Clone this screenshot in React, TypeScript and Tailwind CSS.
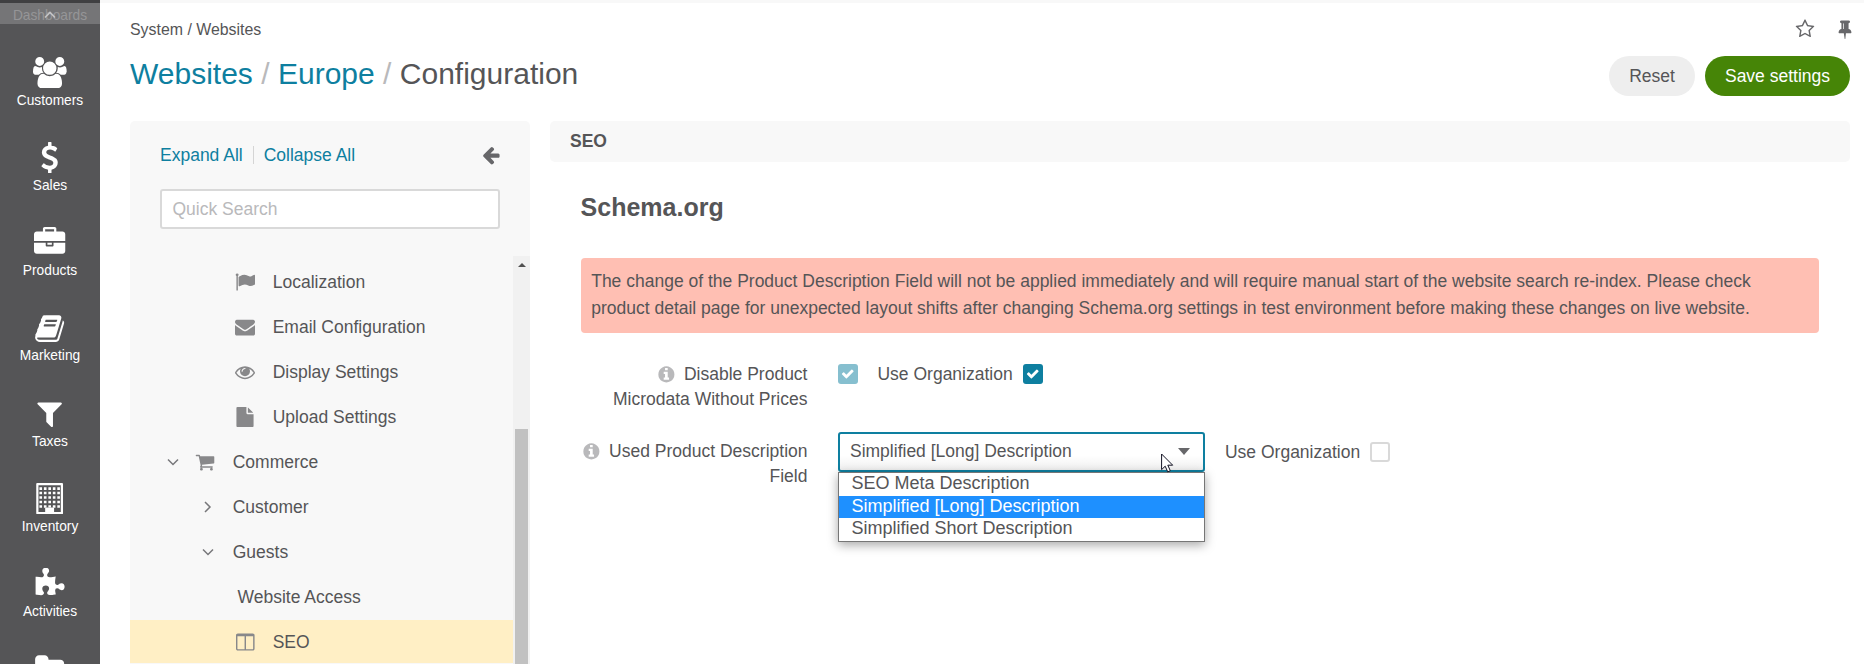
import type { ReactNode } from "react";

const ICONS = {
  users: "M657 896q-162 5-265 128h-134q-82 0-138-40.5t-56-118.5q0-353 124-353 6 0 43.5 21t97.5 42.5 119 21.5q67 0 133-23-5 37-5 66 0 159 93 256zm1071 637q0 120-73 189.5t-194 69.5h-874q-121 0-194-69.5t-73-189.5q0-53 3.5-103.5t14-109 26.5-108.5 43-97.5 62-81 85.5-53.5 111.5-20q10 0 43 21.5t73 48 107 48 135 21.5 135-21.5 107-48 73-48 43-21.5q61 0 111.5 20t85.5 53.5 62 81 43 97.5 26.5 108.5 14 109 3.5 103.5zm-1024-1277q0 106-75 181t-181 75-181-75-75-181 75-181 181-75 181 75 75 181zm704 384q0 159-112.5 271.5t-271.5 112.5-271.5-112.5-112.5-271.5 112.5-271.5 271.5-112.5 271.5 112.5 112.5 271.5zm576 225q0 78-56 118.5t-138 40.5h-134q-103-123-265-128 93-97 93-256 0-29-5-66 66 23 133 23 59 0 119-21.5t97.5-42.5 43.5-21q124 0 124 353zm-128-609q0 106-75 181t-181 75-181-75-75-181 75-181 181-75 181 75 75 181z",
  dollar: "M1362 1185q0 153-99.5 263.5t-258.5 136.5v175q0 14-9 23t-23 9h-135q-13 0-22.5-9.5t-9.5-22.5v-175q-66-9-127.5-31t-101.5-44.5-74-48-46.5-37.5-17.5-18q-17-21-2-41l103-135q7-10 23-12 15-2 24 9l2 2q113 99 243 125 37 8 74 8 81 0 142.5-43t61.5-122q0-28-15-53t-33.5-42-58.5-37.5-66-32-80-32.5q-39-16-61.5-25t-61.5-26.5-62.5-31-56.5-35.5-53.5-42.5-43.5-49-35.5-58-21-66.5-8.5-78q0-138 98-242t255-134v-180q0-13 9.5-22.5t22.5-9.5h135q14 0 23 9t9 23v176q57 6 110.5 23t87 33.5 63.5 37.5 39 29 15 14q17 18 5 38l-81 146q-8 15-23 16-14 3-27-7-3-3-14.5-12t-39-26.5-58.5-32-74.5-26-85.5-11.5q-95 0-155 43t-60 111q0 26 8.5 48t29.5 41.5 39.5 33 56 31 60.5 27 70 27.5q53 20 81 31.5t76 35 75.5 42.5 62 50 53 63.5 31.5 76.5 13 94z",
  briefcase: "M640 256h512v-128h-512v128zm1152 640v480q0 66-47 113t-113 47h-1472q-66 0-113-47t-47-113v-480h672v160q0 26 19 45t45 19h320q26 0 45-19t19-45v-160h672zm-768 0v128h-256v-128h256zm768-480v384h-1792v-384q0-66 47-113t113-47h352v-160q0-40 28-68t68-28h576q40 0 68 28t28 68v160h352q66 0 113 47t47 113z",
  book: "M1703 478q40 57 18 129l-275 906q-19 64-76.5 107.5t-122.5 43.5h-923q-77 0-148.5-53.5t-99.5-131.5q-24-67-2-127 0-4 3-27t4-37q1-8-3-21.5t-3-19.5q2-11 8-21t16.5-23.5 16.5-23.5q23-38 45-91.5t30-91.5q3-10 .5-30t-.5-28q3-11 17-28t17-23q21-36 42-92t25-90q1-9-2.5-32t.5-28q4-13 22-30.5t22-22.5q19-26 42.5-84.5t27.5-96.5q1-8-3-25.5t-2-26.5q2-8 9-18t18-23 17-21q8-12 16.5-30.5t15-35 16-36 19.5-32 26.5-23.5 36-11.5 47.5 5.5l-1 3q38-9 51-9h761q74 0 114 56t18 130l-274 906q-36 119-71.5 153.5t-128.5 34.5h-869q-27 0-38 15-11 16-1 43 24 70 144 70h923q29 0 56-15.5t35-41.5l300-987q7-22 5-57 38 15 59 43zm-1064 2q-4 13 2 22.5t20 9.5h608q13 0 25.5-9.5t16.5-22.5l21-64q4-13-2-22.5t-20-9.5h-608q-13 0-25.5 9.5t-16.5 22.5zm-83 256q-4 13 2 22.5t20 9.5h608q13 0 25.5-9.5t16.5-22.5l21-64q4-13-2-22.5t-20-9.5h-608q-13 0-25.5 9.5t-16.5 22.5z",
  filter: "M1595 295q17 41-14 70l-493 493v742q0 42-39 59-13 5-25 5-27 0-45-19l-256-256q-19-19-19-45v-486l-493-493q-31-29-14-70 17-39 59-39h1280q42 0 59 39z",
  puzzle: "M1755 1082q0 81-44.5 135t-123.5 54q-41 0-77.5-17.5t-59-38-56.5-38-71-17.5q-110 0-110 124 0 39 16 115t15 115v5q-22 0-33 1-34 3-97.5 11.5t-115.5 13.5-98 5q-61 0-103-26.5t-42-83.5q0-37 17.5-71t38-56.5 38-59 17.5-77.5q0-79-54-123.5t-135-44.5q-84 0-143 45.5t-59 127.5q0 43 15 83t33.5 64.5 33.5 53 15 50.5q0 45-46 89-37 35-117 35-95 0-245-24-9-2-27.5-4t-27.5-4l-13-2q-1 0-3-1-2 0-2-1v-1024q2 1 17.5 3.5t34 5 21.5 3.5q150 24 245 24 80 0 117-35 46-44 46-89 0-22-15-50.5t-33.5-53-33.5-64.5-15-83q0-82 59-127.5t144-45.5q80 0 134 44.5t54 123.5q0 41-17.5 77.5t-38 59-38 56.5-17.5 71q0 57 42 83.5t103 26.5q64 0 180-15t163-17v2q-1 2-3.5 17.5t-5 34-3.5 21.5q-24 150-24 245 0 80 35 117 44 46 89 46 22 0 50.5-15t53-33.5 64.5-33.5 83-15q82 0 127.5 59t45.5 143z",
  folder: "M1728 608v704q0 92-66 158t-158 66h-1216q-92 0-158-66t-66-158v-960q0-92 66-158t158-66h320q92 0 158 66t66 158v32h672q92 0 158 66t66 158z",
  flag: "M320 256q0 72-64 110v1266q0 13-9.5 22.5t-22.5 9.5h-64q-13 0-22.5-9.5t-9.5-22.5v-1266q-64-38-64-110 0-53 37.5-90.5t90.5-37.5 90.5 37.5 37.5 90.5zm1472 64v763q0 25-12.5 38.5t-39.5 27.5q-215 116-369 116-61 0-123.5-22t-108.5-48-115.5-48-142.5-22q-192 0-464 146-17 9-33 9-26 0-45-19t-19-45v-742q0-32 31-55 21-14 79-43 236-120 421-120 107 0 200 29t219 88q38 19 88 19 54 0 117.5-21t110-47 88-47 54.5-21q26 0 45 19t19 45z",
  envelope: "M1792 710v794q0 66-47 113t-113 47h-1472q-66 0-113-47t-47-113v-794q44 49 101 87 362 246 497 345 57 42 92.5 65.5t94.5 48 110 24.5h2q51 0 110-24.5t94.5-48 92.5-65.5q170-123 498-345 57-39 100-87zm0-294q0 79-49 151t-122 123q-376 261-468 325-10 7-42.5 30.5t-54 38-52 32.5-57.5 27-50 9h-2q-23 0-50-9t-57.5-27-52-32.5-54-38-42.5-30.5q-91-64-262-182.5t-205-142.5q-62-42-117-115.5t-55-136.5q0-78 41.5-130t118.5-52h1472q65 0 112.5 47t47.5 113z",
  eye: "M1664 960q-152-236-381-353 61 104 61 225 0 185-131.5 316.5t-316.5 131.5-316.5-131.5-131.5-316.5q0-121 61-225-229 117-381 353 133 205 333.5 326.5t434.5 121.5 434.5-121.5 333.5-326.5zm-720-384q0-20-14-34t-34-14q-125 0-214.5 89.5t-89.5 214.5q0 20 14 34t34 14 34-14 14-34q0-86 61-147t147-61q20 0 34-14t14-34zm848 384q0 34-20 69-140 230-376.5 368.5t-499.5 138.5-499.5-139-376.5-368q-20-35-20-69t20-69q140-229 376.5-368t499.5-139 499.5 139 376.5 368q20 35 20 69z",
  file: "M1152 512v-472q22 14 36 28l408 408q14 14 28 36h-472zm-128 32q0 40 28 68t68 28h544v1056q0 40-28 68t-68 28h-1344q-40 0-68-28t-28-68v-1600q0-40 28-68t68-28h800v544z",
  cart: "M704 1536q0 52-38 90t-90 38-90-38-38-90 38-90 90-38 90 38 38 90zm896 0q0 52-38 90t-90 38-90-38-38-90 38-90 90-38 90 38 38 90zm128-1088v512q0 24-16.5 42.5t-40.5 21.5l-1044 122q13 60 13 70 0 16-24 64h920q26 0 45 19t19 45-19 45-45 19h-1024q-26 0-45-19t-19-45q0-11 8-31.5t16-36 21.5-40 15.5-29.5l-177-823h-204q-26 0-45-19t-19-45 19-45 45-19h256q16 0 28.5 6.5t19.5 15.5 13 24.5 8 26 5.5 29.5 4.5 26h1201q26 0 45 19t19 45z",
  columns: "M160 1536h608v-1152h-640v1120q0 13 9.5 22.5t22.5 9.5zm1376-32v-1120h-640v1152h608q13 0 22.5-9.5t9.5-22.5zm128-1216v1216q0 66-47 113t-113 47h-1344q-66 0-113-47t-47-113v-1216q0-66 47-113t113-47h1344q66 0 113 47t47 113z",
  arrowLeft: "M1664 896v128q0 53-32.5 90.5t-84.5 37.5h-704l293 294q38 36 38 90t-38 90l-75 76q-37 37-90 37-52 0-91-37l-651-652q-37-37-37-90 0-52 37-91l651-650q38-38 91-38 52 0 90 38l75 74q38 38 38 91t-38 91l-293 293h704q52 0 84.5 37.5t32.5 90.5z",
  star: "M1201 1004l306-297-422-62-189-382-189 382-422 62 306 297-73 421 378-199 377 199zm527-357q0 22-26 48l-363 354 86 500q1 7 1 20 0 50-41 50-19 0-40-12l-449-236-449 236q-22 12-40 12-21 0-31.5-14.5t-10.5-35.5q0-6 2-20l86-500-364-354q-25-27-25-48 0-37 56-46l502-73 225-455q19-41 49-41t49 41l225 455 502 73q56 9 56 46z",
  pin: "M800 864v-448q0-14-9-23t-23-9-23 9-9 23v448q0 14 9 23t23 9 23-9 9-23zm672 352q0 26-19 45t-45 19h-429l-51 483q-2 12-10.5 20.5t-20.5 8.5h-1q-27 0-32-27l-76-485h-404q-26 0-45-19t-19-45q0-123 78.5-221.5t177.5-98.5v-512q-52 0-90-38t-38-90 38-90 90-38h640q52 0 90 38t38 90-38 90-90 38v512q99 0 177.5 98.5t78.5 221.5z",
  info: "M1152 1376v-160q0-14-9-23t-23-9h-96v-512q0-14-9-23t-23-9h-320q-14 0-23 9t-9 23v160q0 14 9 23t23 9h96v320h-96q-14 0-23 9t-9 23v160q0 14 9 23t23 9h448q14 0 23-9t9-23zm-128-896v-160q0-14-9-23t-23-9h-192q-14 0-23 9t-9 23v160q0 14 9 23t23 9h192q14 0 23-9t9-23zm640 416q0 209-103 385.5t-279.5 279.5-385.5 103-385.5-103-279.5-279.5-103-385.5 103-385.5 279.5-279.5 385.5-103 385.5 103 279.5 279.5 103 385.5z",
  check: "M1671 566q0 40-28 68l-724 724-136 136q-28 28-68 28t-68-28l-136-136-362-362q-28-28-28-68t28-68l136-136q28-28 68-28t68 28l294 295 656-657q28-28 68-28t68 28l136 136q28 28 28 68z",
  building:
    "M192 0h1408q26 0 45 19t19 45v1664q0 26-19 45t-45 19h-1408q-26 0-45-19t-19-45v-1664q0-26 19-45t45-19zM256 128v1536h384v-224q0-13 9.5-22.5t22.5-9.5h448q13 0 22.5 9.5t9.5 22.5v224h384v-1536z" +
    [256, 512, 768, 1024, 1280]
      .map((y) => [370, 626, 882, 1138, 1394].map((x) => `M${x - 58} ${y - 10}h150v150h-150z`).join(""))
      .join(""),
};

type IconName = keyof typeof ICONS;

function Icon({ name, className, box = "0 0 1792 1792" }: { name: IconName; className: string; box?: string }) {
  return (
    <svg viewBox={box} fill="currentColor" fillRule={name === "building" ? "evenodd" : "nonzero"} className={`shrink-0 ${className}`} aria-hidden="true">
      <path d={ICONS[name]} />
    </svg>
  );
}

function Angle({ open }: { open: boolean }) {
  return (
    <svg viewBox="0 0 12 12" fill="none" stroke="currentColor" strokeWidth="1.5" className="size-3 shrink-0" aria-hidden="true">
      <path d={open ? "M1 3.5 6 8.5 11 3.5" : "M3 1 8 6 3 11"} />
    </svg>
  );
}

const NAV: { icon: IconName; label: string; box?: string; size?: string }[] = [
  { icon: "users", label: "Customers", box: "64 0 1920 1792", size: "w-[33.5px] h-[31.25px]" },
  { icon: "dollar", label: "Sales" },
  { icon: "briefcase", label: "Products" },
  { icon: "book", label: "Marketing" },
  { icon: "filter", label: "Taxes" },
  { icon: "building", label: "Inventory" },
  { icon: "puzzle", label: "Activities" },
  { icon: "folder", label: "" },
];

function Sidebar() {
  return (
    <nav className="flex w-[100px] shrink-0 flex-col overflow-hidden bg-[#555557] text-white">
      <div className="h-[3px] shrink-0 bg-[#404042]" />
      <div className="relative flex h-[21px] shrink-0 items-center justify-center bg-[#757577] text-[13.75px] leading-none text-[#959597]">
        <span className="pt-[4px]">Dashboards</span>
        <svg viewBox="0 0 12 8" fill="none" stroke="#c4c4c6" strokeWidth="1.6" className="absolute left-[44px] top-[8px] h-2 w-3">
          <path d="M1 6.5 6 1.5 11 6.5" />
        </svg>
      </div>
      <ul className="flex flex-col pt-[33px]">
        {NAV.map((item) => (
          <li key={item.icon} className="flex h-[85.2px] shrink-0 flex-col items-center">
            <Icon name={item.icon} box={item.box} className={item.size ?? "size-[31.25px]"} />
            <span className="mt-[4.6px] text-[13.75px] leading-[16px]">{item.label}</span>
          </li>
        ))}
      </ul>
    </nav>
  );
}

function TreeRow({ pad, active, children }: { pad: string; active?: boolean; children: ReactNode }) {
  return (
    <li className={`mb-[2px] flex h-[43px] shrink-0 items-center ${pad} ${active ? "bg-[#ffefc5]" : ""}`}>{children}</li>
  );
}

const SETTINGS: { icon: IconName; label: string }[] = [
  { icon: "flag", label: "Localization" },
  { icon: "envelope", label: "Email Configuration" },
  { icon: "eye", label: "Display Settings" },
  { icon: "file", label: "Upload Settings" },
];

function ConfigTree() {
  return (
    <aside className="flex w-[400px] shrink-0 flex-col overflow-hidden rounded-t-[5px] bg-[#f8f8f8]">
      <div className="flex h-[68px] shrink-0 items-center pl-[30px] pr-[29px] text-[#0e7fa0]">
        <span>Expand All</span>
        <span className="mx-[10px] h-[18px] w-px bg-[#d5d5d5]" />
        <span>Collapse All</span>
        <Icon name="arrowLeft" className="ml-auto size-5 text-[#67676a]" />
      </div>
      <div className="mx-[30px] flex h-10 shrink-0 items-center rounded-[3px] border-2 border-[#d9d9d9] bg-white pl-[10.5px] text-[#b9b9bb]">
        Quick Search
      </div>
      <div className="mt-[27px] flex min-h-0 flex-1">
        <ul className="flex min-w-0 flex-1 flex-col pt-1">
          {SETTINGS.map((s) => (
            <TreeRow key={s.label} pad="pl-[105px]">
              <Icon name={s.icon} className="size-5 text-[#88888a]" />
              <span className="ml-[17.7px]">{s.label}</span>
            </TreeRow>
          ))}
          <TreeRow pad="pl-[36.5px] text-[#77777a]">
            <Angle open />
            <Icon name="cart" className="ml-[16.5px] size-5 text-[#88888a]" />
            <span className="ml-[17.7px] text-[#555557]">Commerce</span>
          </TreeRow>
          <TreeRow pad="pl-[71.5px] text-[#77777a]">
            <Angle open={false} />
            <span className="ml-[19.2px] text-[#555557]">Customer</span>
          </TreeRow>
          <TreeRow pad="pl-[71.5px] text-[#77777a]">
            <Angle open />
            <span className="ml-[19.2px] text-[#555557]">Guests</span>
          </TreeRow>
          <TreeRow pad="pl-[107.5px]">Website Access</TreeRow>
          <TreeRow pad="pl-[105.5px]" active>
            <Icon name="columns" className="size-5 text-[#88888a]" />
            <span className="ml-[17.2px]">SEO</span>
          </TreeRow>
        </ul>
        <div className="flex w-[17px] shrink-0 flex-col items-center bg-[#f1f1f1]">
          <svg viewBox="0 0 8 4" className="mt-[7px] h-1 w-2 shrink-0" fill="#505050">
            <path d="M0 4 4 0 8 4z" />
          </svg>
          <div className="mt-[162px] w-[13px] flex-1 bg-[#c1c1c1]" />
        </div>
      </div>
    </aside>
  );
}

function CheckBox({ tone }: { tone: string }) {
  return (
    <span className={`flex size-5 shrink-0 items-center justify-center rounded-[3px] text-white ${tone}`}>
      <Icon name="check" className="size-[13.5px]" />
    </span>
  );
}

function SelectField() {
  const options = ["SEO Meta Description", "Simplified [Long] Description", "Simplified Short Description"];
  return (
    <div className="relative w-[367px] shrink-0">
      <div className="flex h-10 items-center rounded-[3px] border-2 border-[#0e7fa0] bg-white bg-linear-to-b from-white from-60% to-[#f0f0f0] pl-[10px] pr-[13px]">
        <span className="-mt-[3px]">Simplified [Long] Description</span>
        <svg viewBox="0 0 12 7" className="-mt-[1px] ml-auto h-[7px] w-3" fill="#67676a">
          <path d="M0 0h12L6 7z" />
        </svg>
      </div>
      <ul className="absolute left-0 top-10 flex h-[70px] w-[367px] flex-col border border-[#767676] bg-white text-[18px] shadow-[0_3px_10px_rgba(0,0,0,0.35)]">
        {options.map((o, i) => (
          <li
            key={o}
            className={
              i === 1
                ? "flex h-[22px] items-center bg-[#1e90ff] pb-[2px] pl-[12.5px] text-white"
                : i === 0
                  ? "flex h-[23px] items-center pb-[4px] pl-[12.5px]"
                  : "flex h-[22px] items-center pb-[3px] pl-[12.5px]"
            }
          >
            {o}
          </li>
        ))}
      </ul>
      <svg viewBox="0 0 13 20" className="absolute left-[323px] top-[21px] h-5 w-[13px]" fill="#fff" stroke="#111122" strokeWidth="1">
        <path d="M.6 1v15.6l3.6-3.4 2.5 5.6 2.6-1.1-2.5-5.5h4.9z" />
      </svg>
    </div>
  );
}

function Content() {
  return (
    <section className="flex min-w-0 flex-1 flex-col">
      <h2 className="flex h-[41px] shrink-0 items-center rounded-[5px] bg-[#f8f8f8] pb-px pl-[20px] font-bold">SEO</h2>
      <div className="flex flex-col pl-[30.6px] pr-[31px]">
        <h3 className="mt-[30px] text-[25px] font-bold leading-[30px]">Schema.org</h3>
        <p className="mt-[36px] h-[75px] rounded-[4px] bg-[#ffbfb3] pl-[10.6px] pr-10 pt-[10px] leading-[27px]">
          The change of the Product Description Field will not be applied immediately and will require manual start of the website search re-index. Please check
          <br />
          product detail page for unexpected layout shifts after changing Schema.org settings in test environment before making these changes on live website.
        </p>
        <div className="mt-[28px] flex items-start">
          <div className="mt-px w-[226.9px] text-right leading-[25px]">
            <Icon name="info" className="mb-[3px] mr-[8px] inline size-[18.75px] text-[#b9b9bb]" />
            Disable Product
            <br />
            Microdata Without Prices
          </div>
          <div className="ml-[30.5px] mt-[3px] flex h-5 items-center">
            <CheckBox tone="bg-[#86bfcf]" />
            <span className="ml-[19.5px]">Use Organization</span>
            <span className="ml-[10.5px] flex">
              <CheckBox tone="bg-[#0e7fa0]" />
            </span>
          </div>
        </div>
        <div className="mt-[20px] flex items-start">
          <div className="mt-[7px] w-[226.9px] whitespace-nowrap text-right leading-[25px]">
            <Icon name="info" className="mb-[3px] mr-[8px] inline size-[18.75px] text-[#b9b9bb]" />
            Used Product Description
            <br />
            Field
          </div>
          <div className="ml-[30.5px] flex">
            <SelectField />
            <div className="ml-[20px] flex h-10 items-center">
              <span>Use Organization</span>
              <span className="ml-[10px] size-5 rounded-[3px] border-2 border-[#d9d9d9] bg-white" />
            </div>
          </div>
        </div>
      </div>
    </section>
  );
}

export default function App() {
  return (
    <div className="flex h-[664px] w-[1864px] overflow-hidden bg-white font-['Liberation_Sans',Arial,sans-serif] text-[17.5px] leading-[22px] text-[#555557]">
      <Sidebar />
      <main className="flex min-w-0 flex-1 flex-col">
        <div className="h-[3px] shrink-0 bg-[#f8f8f8]" />
        <header className="flex h-[118px] shrink-0 justify-between pl-[30px] pr-[14px]">
          <div>
            <div className="pt-[16px] text-[15.9px] leading-[22px]">System / Websites</div>
            <h1 className="mt-[15px] flex text-[30px] leading-[36px]">
              <span className="text-[#0e7fa0]">Websites</span>
              <span className="mx-[8.4px] text-[#b9b9bb]">/</span>
              <span className="text-[#0e7fa0]">Europe</span>
              <span className="mx-[8.4px] text-[#b9b9bb]">/</span>
              <span>Configuration</span>
            </h1>
          </div>
          <div className="flex flex-col items-end">
            <div className="-mr-[5px] mt-[16px] flex items-center gap-[20px] text-[#67676a]">
              <Icon name="star" className="size-5" />
              <Icon name="pin" className="size-5" />
            </div>
            <div className="mt-[17px] flex gap-[10px]">
              <span className="flex h-10 w-[86px] items-center justify-center rounded-full bg-[#eeeeee]">Reset</span>
              <span className="flex h-10 w-[145px] items-center justify-center rounded-full bg-[#468507] text-white">Save settings</span>
            </div>
          </div>
        </header>
        <div className="flex min-h-0 flex-1 gap-5 pl-[30px] pr-[14px]">
          <ConfigTree />
          <Content />
        </div>
      </main>
    </div>
  );
}
